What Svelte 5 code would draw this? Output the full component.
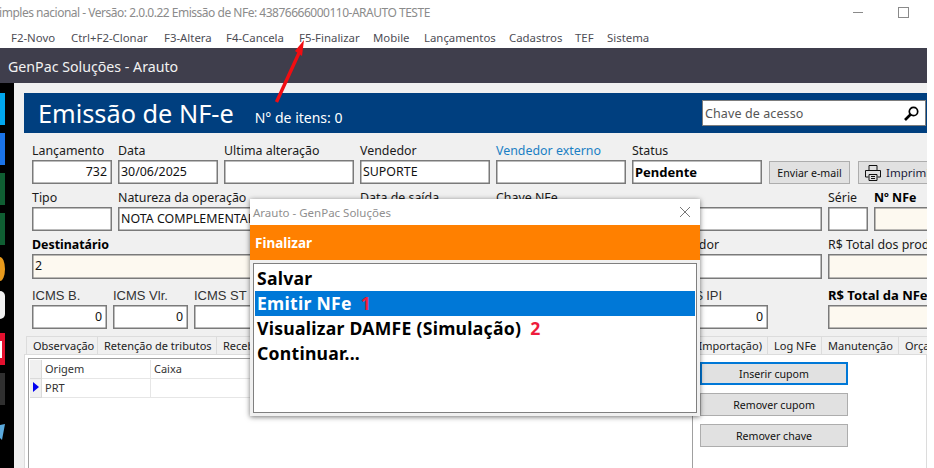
<script lang="ts">
  const menu = [
    { label: 'F2-Novo', w: 60 },
    { label: 'Ctrl+F2-Clonar', w: 93 },
    { label: 'F3-Altera', w: 62 },
    { label: 'F4-Cancela', w: 73 },
    { label: 'F5-Finalizar', w: 74 },
    { label: 'Mobile', w: 51 },
    { label: 'Lançamentos', w: 85 },
    { label: 'Cadastros', w: 66 },
    { label: 'TEF', w: 32 },
    { label: 'Sistema', w: 50 }
  ];
  const row1 = [
    { label: 'Lançamento', value: '732', right: true },
    { label: 'Data', value: '30/06/2025' },
    { label: 'Ultima alteração', value: '' },
    { label: 'Vendedor', value: 'SUPORTE' },
    { label: 'Vendedor externo', value: '', link: true },
    { label: 'Status', value: 'Pendente', strong: true }
  ];
  const taxes = ['ICMS B.', 'ICMS Vlr.', 'ICMS ST', 'ST Vlr.', 'Frete', 'Seguro', 'Desconto'];
  const tabs = [
    { label: 'Observação', w: 72 },
    { label: 'Retenção de tributos', w: 119 },
    { label: 'Recebimentos', w: 90 },
    { label: 'Referenciadas', w: 130 },
    { label: 'Chaves de acesso (Importação)', w: 331 },
    { label: 'Log NFe', w: 54 },
    { label: 'Manutenção', w: 77 },
    { label: 'Orçamentos', w: 80 }
  ];
  const options = [
    { label: 'Salvar' },
    { label: 'Emitir NFe', key: '1', active: true },
    { label: 'Visualizar DAMFE (Simulação)', key: '2' },
    { label: 'Continuar...' }
  ];
</script>

<div class="page">
  <header class="titlebar">
    <span class="title">Simples nacional - Versão: 2.0.0.22 Emissão de NFe: 43876666000110-ARAUTO TESTE</span>
    <span class="minimize"></span>
    <span class="maximize"></span>
  </header>
  <nav class="menu">
    {#each menu as item}<span style="width:{item.w}px">{item.label}</span>{/each}
  </nav>
  <div class="appbar">GenPac Soluções - Arauto</div>

  <div class="body">
    <aside class="dock">
      <i class="d-cyan"></i>
      <i class="d-blue"></i>
      <i class="d-green"></i>
      <i class="d-green"></i>
      <i class="d-orange"></i>
      <i class="d-white"></i>
      <i class="d-red"></i>
      <i class="d-dark"></i>
      <svg class="d-sky" width="5" height="16" viewBox="0 0 5 16"><path d="M0 1L5 0L2 16L0 14Z" fill="#5aa9dc" /></svg>
    </aside>

    <main class="form">
      <div class="banner">
        <h1>Emissão de NF-e</h1>
        <span class="count">N° de itens: 0</span>
        <div class="search">
          <span>Chave de acesso</span>
          <svg width="17" height="15" viewBox="0 0 17 15" fill="none" stroke="#000">
            <circle cx="10.500" cy="5.500" r="4.200" stroke-width="1.700" />
            <path d="M7.500 8.500L2 14" stroke-width="2.600" />
          </svg>
        </div>
      </div>

      <div class="row r1">
        {#each row1 as f}
          <div class="field">
            <label class:link={f.link}>{f.label}</label>
            <div class="input" class:right={f.right} class:strong={f.strong}>{f.value}</div>
          </div>
        {/each}
        <button class="btn email">Enviar e-mail</button>
        <button class="btn print">
          <svg width="18" height="18" viewBox="0 0 18 18" fill="none" stroke="#111" stroke-width="1">
            <path d="M5 6V1.500H13V6M4.500 13H1.500V6.500H16.500V13H13.500" />
            <path d="M5 10.500H13V16.500H5ZM7 12.500H11M7 14.500H11" />
          </svg>
          Imprimir
        </button>
      </div>

      <div class="row r2">
        <div class="field"><label>Tipo</label><div class="input"></div></div>
        <div class="field"><label>Natureza da operação</label><div class="input">NOTA COMPLEMENTAR</div></div>
        <div class="field"><label>Data de saída</label><div class="input"></div></div>
        <div class="field"><label>Chave NFe</label><div class="input"></div></div>
        <div class="field"><label>Série</label><div class="input"></div></div>
        <div class="field"><label class="bold">Nº NFe</label><div class="input cream"></div></div>
      </div>

      <div class="row r3">
        <div class="field"><label class="bold">Destinatário</label><div class="input cream tall">2</div></div>
        <div class="field"><label>Intermediador</label><div class="input tall"></div></div>
        <div class="field"><label>R$ Total dos produtos</label><div class="input cream tall"></div></div>
      </div>

      <div class="row r4">
        {#each taxes as t}
          <div class="field arial"><label>{t}</label><div class="input right">0</div></div>
        {/each}
        <div class="field arial ipi"><label>R$ IPI</label><div class="input right">0</div></div>
        <div class="field total"><label class="bold">R$ Total da NFe</label><div class="input cream"></div></div>
      </div>

      <div class="tabs">
        {#each tabs as t}
          <span style="width:{t.w}px" class:tail={t.w === 331}>{t.label}</span>
        {/each}
      </div>

      <div class="panel">
        <div class="grid">
          <div class="grid-row head">
            <span class="marker"></span><span class="c1">Origem</span><span class="c2">Caixa</span>
          </div>
          <div class="grid-row">
            <span class="marker"><b></b></span><span class="c1">PRT</span><span class="c2"></span>
          </div>
        </div>
        <div class="actions">
          <button class="btn focused">Inserir cupom</button>
          <button class="btn">Remover cupom</button>
          <button class="btn">Remover chave</button>
        </div>
      </div>
    </main>
  </div>

  <section class="dialog">
    <div class="dialog-title">
      <span>Arauto - GenPac Soluções</span>
      <svg width="12" height="12" viewBox="0 0 12 12" stroke="#777" stroke-width="1"><path d="M1 1L11 11M11 1L1 11" /></svg>
    </div>
    <div class="dialog-head">Finalizar</div>
    <div class="list">
      {#each options as o}
        <div class="option" class:active={o.active}>{o.label}{#if o.key}<em>{o.key}</em>{/if}</div>
      {/each}
    </div>
  </section>

  <svg class="arrow" width="44" height="68" viewBox="0 0 44 68">
    <path d="M3.500 64L26 15" stroke="#f10d12" stroke-width="3.400" />
    <path d="M31 2L22 13L29 18Z" fill="#f10d12" />
  </svg>
</div>

<style>
  :global(body) {
    margin: 0;
    background: #fff;
  }
  .page {
    position: relative;
    width: 927px;
    height: 468px;
    overflow: hidden;
    font-family: "Noto Sans", "Open Sans", sans-serif;
    font-size: 12px;
    color: #111;
    background: #fff;
  }
  .titlebar {
    position: relative;
    height: 25px;
    line-height: 25px;
    color: #8b8b8b;
    white-space: nowrap;
    letter-spacing: -0.49px;
  }
  .title {
    margin-left: -7px;
  }
  .minimize {
    position: absolute;
    left: 853px;
    top: 12px;
    width: 10px;
    height: 1px;
    background: #8a8a8a;
  }
  .maximize {
    position: absolute;
    left: 898px;
    top: 7px;
    width: 9px;
    height: 9px;
    border: 1px solid #8a8a8a;
  }
  .menu {
    display: flex;
    height: 21px;
    line-height: 25px;
    padding-left: 11px;
    font-size: 11.400px;
    color: #4d4d55;
    white-space: nowrap;
  }
  .menu span {
    flex: none;
  }
  .appbar {
    margin-top: 2px;
    height: 35px;
    line-height: 37px;
    padding-left: 8px;
    background: #3f3e4c;
    color: #f2f2f2;
    font-size: 14.200px;
  }
  .body {
    display: flex;
    height: 385px;
    background: #f0f0f0;
  }
  .dock {
    width: 14px;
    flex: none;
    background: #000;
    padding-top: 10px;
    box-sizing: border-box;
    display: flex;
    flex-direction: column;
  }
  .dock i {
    display: block;
    width: 5px;
    height: 32px;
    margin-bottom: 8px;
  }
  .d-cyan { background: #00a6ed; }
  .d-blue { background: #1a73e8; }
  .dock .d-green { background: #0f5e32; }
  .dock .d-orange {
    height: 24px;
    margin: 4px 0 10px;
    background: #e89a1c;
    border-radius: 0 100% 100% 0 / 0 50% 50% 0;
  }
  .dock .d-white {
    height: 28px;
    margin-bottom: 14px;
    background: #f0f0f0;
    border-radius: 0 5px 5px 0;
  }
  .d-red {
    box-sizing: border-box;
    background-image: linear-gradient(90deg, transparent 2px, #e3102e 2px), linear-gradient(#e3102e 8px, #fff 8px, #fff 25px, #e3102e 25px);
  }
  .d-dark { background: #2f2f2f; }
  .d-sky {
    margin-top: 11px;
  }
  .form {
    flex: 1;
    min-width: 0;
    padding: 10px 0 0 10px;
    overflow: hidden;
  }
  .banner {
    display: flex;
    align-items: center;
    height: 40px;
    padding-left: 14px;
    background: #003f7f;
    color: #fff;
  }
  h1 {
    margin: 0 21px 0 0;
    font-size: 25.300px;
    font-weight: 400;
    line-height: 40px;
  }
  .count {
    font-size: 14px;
    margin-top: 9px;
  }
  .search {
    margin: 0 1px 0 auto;
    display: flex;
    align-items: center;
    justify-content: space-between;
    box-sizing: border-box;
    width: 224px;
    height: 26px;
    padding: 0 5px 0 2px;
    background: #fff;
    border: 1px solid #7d7d7d;
    color: #555;
    font-size: 12.500px;
    letter-spacing: 0.1px;
  }
  .row {
    display: grid;
    column-gap: 6px;
    margin-left: 8px;
    height: 47px;
  }
  .r1 {
    margin-top: 9px;
    grid-template-columns: 80px 100px 130px 130px 130px 130px 82px 90px;
  }
  .r2 {
    grid-template-columns: 80px 236px 130px 326px 40px 70px;
  }
  .r3 {
    grid-template-columns: 596px 188px 120px;
    height: 51px;
  }
  .r4 {
    grid-template-columns: repeat(7, 75px) 1fr;
    position: relative;
  }
  .field {
    min-width: 0;
  }
  label {
    display: block;
    height: 18px;
    line-height: 17px;
    font-size: 12.400px;
    white-space: nowrap;
    color: #1a1a1a;
  }
  label.link {
    color: #1a7fc4;
  }
  label.bold {
    font-weight: 700;
    color: #000;
  }
  .input {
    box-sizing: border-box;
    height: 24px;
    line-height: 22px;
    padding: 0 2px;
    background: #fff;
    border: 1px solid #7a7a7a;
    box-shadow: inset 0 0 0 0.5px #7a7a7a;
    white-space: nowrap;
    overflow: hidden;
    font-size: 12.400px;
  }
  .input.tall {
    height: 25px;
  }
  .input.right {
    text-align: right;
    padding-right: 4px;
  }
  .input.strong {
    font-weight: 700;
    font-size: 13px;
    color: #000;
  }
  .input.cream {
    background: #fdf9f0;
  }
  .arial label {
    font-family: "Liberation Sans", Arial, sans-serif;
    font-size: 13px;
    color: #333;
  }
  .ipi {
    position: absolute;
    left: 661px;
    width: 75px;
  }
  .ipi label {
    margin-left: -7px;
  }
  .total {
    position: absolute;
    left: 796px;
    width: 120px;
  }
  .total label {
    font-size: 13px;
  }
  .r1 .btn {
    height: 23px;
    margin-top: 19px;
  }
  .r1 .email {
    margin-left: 1px;
    width: auto;
  }
  .r1 .print {
    margin-left: 2px;
    width: auto;
    display: flex;
    align-items: center;
    gap: 4px;
    white-space: nowrap;
    padding: 0 0 0 5px;
    font-size: 11.500px;
    color: #1a1a3a;
  }
  .btn {
    box-sizing: border-box;
    width: 148px;
    height: 23px;
    padding: 0;
    background: #e1e1e1;
    border: 1px solid #adadad;
    font-family: inherit;
    font-size: 10.600px;
    color: #111;
  }
  .btn.focused {
    border: 2px solid #0078d7;
  }
  .tabs {
    display: flex;
    margin: 2px 0 0 2px;
    height: 18px;
  }
  .tabs span {
    box-sizing: border-box;
    flex: none;
    height: 18px;
    line-height: 17px;
    padding-left: 6px;
    border: 1px solid #dcdcdc;
    border-left-width: 0;
    border-bottom: 0;
    background: #f0f0f0;
    white-space: nowrap;
    overflow: hidden;
    color: #222;
    font-size: 11px;
  }
  .tabs span:first-child {
    border-left-width: 1px;
  }
  .tabs .tail {
    text-align: right;
    padding-right: 5px;
    padding-left: 0;
  }
  .panel {
    display: flex;
    height: 115px;
    background: #fff;
    border: 1px solid #dcdcdc;
    border-bottom: 0;
    padding: 3px 0 0 3px;
  }
  .grid {
    flex: none;
    box-sizing: border-box;
    width: 665px;
    height: 120px;
    border: solid #a0a0a0;
    border-width: 1px 1px 0 1px;
    padding: 1px;
  }
  .grid-row {
    display: flex;
    height: 19px;
    line-height: 18px;
    font-size: 11px;
    color: #333;
  }
  .marker {
    width: 11px;
    flex: none;
    background: #f0f0f0;
    border-right: 1px solid #dadada;
    border-bottom: 1px solid #dadada;
    position: relative;
  }
  .marker b {
    position: absolute;
    left: 3px;
    top: 3px;
    border-left: 6px solid #0000f0;
    border-top: 5.500px solid transparent;
    border-bottom: 5.500px solid transparent;
  }
  .c1, .c2 {
    box-sizing: border-box;
    border-bottom: 1px solid #e6e6e6;
  }
  .c1 {
    width: 109px;
    padding-left: 3px;
    border-right: 1px solid #e6e6e6;
  }
  .c2 {
    flex: 1;
    padding-left: 3px;
  }
  .actions {
    display: flex;
    flex-direction: column;
    gap: 8px;
    margin-left: 7px;
    padding-top: 4px;
  }
  .dialog {
    position: absolute;
    left: 250px;
    top: 199px;
    width: 450px;
    height: 217px;
    background: #f0f0f0;
    box-shadow: 0 1px 5px rgba(0, 0, 0, 0.55);
  }
  .dialog-title {
    display: flex;
    align-items: center;
    justify-content: space-between;
    height: 26px;
    padding: 0 9px 0 3px;
    background: #fff;
    color: #8f8f8f;
    font-size: 11.500px;
  }
  .dialog-head {
    height: 35px;
    line-height: 37px;
    padding-left: 5px;
    background: #ff8000;
    color: #fff;
    font-weight: 700;
    font-size: 13.500px;
  }
  .list {
    box-sizing: border-box;
    height: 150px;
    margin: 3px 3px 0;
    padding: 2px 1px;
    background: #fff;
    border: 1px solid #7f7f7f;
  }
  .option {
    height: 25px;
    line-height: 25px;
    padding-left: 2px;
    font-size: 17.600px;
    letter-spacing: 0.26px;
    font-weight: 700;
    color: #000;
    white-space: nowrap;
  }
  .option.active {
    background: #0078d7;
    color: #fff;
  }
  .option em {
    font-style: normal;
    color: #ee1c3c;
    margin-left: 9px;
  }
  .arrow {
    position: absolute;
    left: 273px;
    top: 38px;
  }
</style>
